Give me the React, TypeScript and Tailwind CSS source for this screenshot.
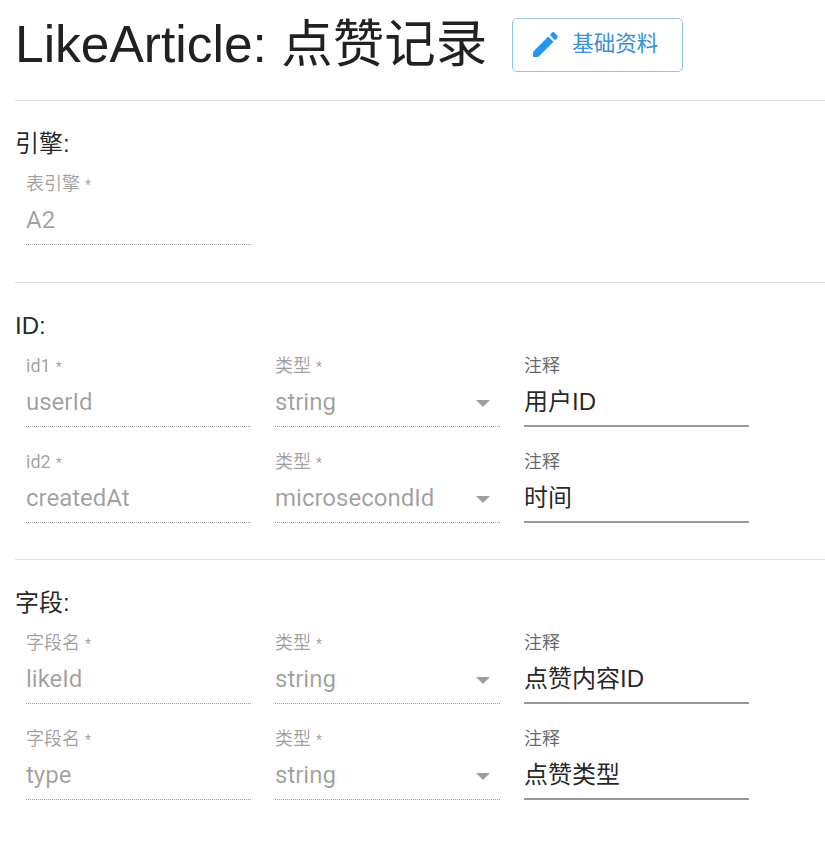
const font = { fontFamily: "Roboto, 'Noto Sans CJK SC', sans-serif" };

function Heading({ children }: { children: string }) {
  return <div className="text-[24px] leading-[32px] text-[#000000de] font-['Liberation_Sans','Noto_Sans_CJK_SC',sans-serif]">{children}</div>;
}

function Field({ label, value, select, active, required }: { label: string; value: string; select?: boolean; active?: boolean; required?: boolean }) {
  return (
    <div className="w-[225px] shrink-0 h-[86px] relative pt-[14px]">
      <div className={active ? "text-[18px] leading-[20px] text-[#00000099]" : "text-[18px] leading-[20px] text-[#00000061]"}>
        {label}
        {required && <span className="ml-[5px] text-[14px] leading-none">*</span>}
      </div>
      <div className={active ? "mt-[10px] text-[24px] leading-[32px] text-[#000000de] font-['Liberation_Sans','Noto_Sans_CJK_SC',sans-serif]" : "mt-[10px] text-[24px] leading-[32px] text-[#00000061]"}>{value}</div>
      {select && <div className="absolute right-[10px] top-[58px] w-0 h-0 border-l-[7px] border-r-[7px] border-t-[7px] border-l-transparent border-r-transparent border-t-[#00000061]" />}
      <div className={active ? "absolute left-0 right-0 bottom-[1px] border-b-2 border-[#00000066]" : "absolute left-0 right-0 bottom-[1px] border-b border-dotted border-[#00000061]"} />
    </div>
  );
}

function Row({ a, aLabel, b, note }: { a: string; aLabel: string; b: string; note: string }) {
  return (
    <div className="flex gap-[24px] pl-[11px]">
      <Field label={aLabel} value={a} required />
      <Field label="类型" value={b} select required />
      <Field label="注释" value={note} active />
    </div>
  );
}

export default function App() {
  return (
    <div style={font} className="w-[825px] h-[856px] overflow-hidden bg-white pl-[15px]">
      <div className="flex items-center h-[101px] pb-[11px] border-b border-[#e0e0e0]">
        <h1 className="text-[51.5px] font-normal text-[#000000de] font-['Liberation_Sans','Noto_Sans_CJK_SC',sans-serif]">LikeArticle: 点赞记录</h1>
        <button className="ml-[25px] flex items-center gap-[10px] w-[171px] h-[54px] pl-[16px] border border-[#8fc4ea] rounded-[5px] text-[#3a8fd6] text-[21.5px]">
          <svg width="33" height="33" viewBox="0 0 24 24" fill="#2196f3">
            <path d="M3 17.25V21h3.75L17.81 9.94l-3.75-3.75L3 17.25zM20.71 7.04c.39-.39.39-1.02 0-1.41l-2.34-2.34c-.39-.39-1.02-.39-1.41 0l-1.83 1.83 3.75 3.75 1.83-1.83z" />
          </svg>
          基础资料
        </button>
      </div>
      <div className="h-[182px] border-b border-[#e0e0e0] pt-[27px]">
        <Heading>引擎:</Heading>
        <div className="pl-[11px]"><Field label="表引擎" value="A2" required /></div>
      </div>
      <div className="h-[277px] border-b border-[#e0e0e0] pt-[27px]">
        <Heading>ID:</Heading>
        <Row aLabel="id1" a="userId" b="string" note="用户ID" />
        <div className="mt-[10px]"><Row aLabel="id2" a="createdAt" b="microsecondId" note="时间" /></div>
      </div>
      <div className="pt-[27px]">
        <Heading>字段:</Heading>
        <Row aLabel="字段名" a="likeId" b="string" note="点赞内容ID" />
        <div className="mt-[10px]"><Row aLabel="字段名" a="type" b="string" note="点赞类型" /></div>
      </div>
    </div>
  );
}
